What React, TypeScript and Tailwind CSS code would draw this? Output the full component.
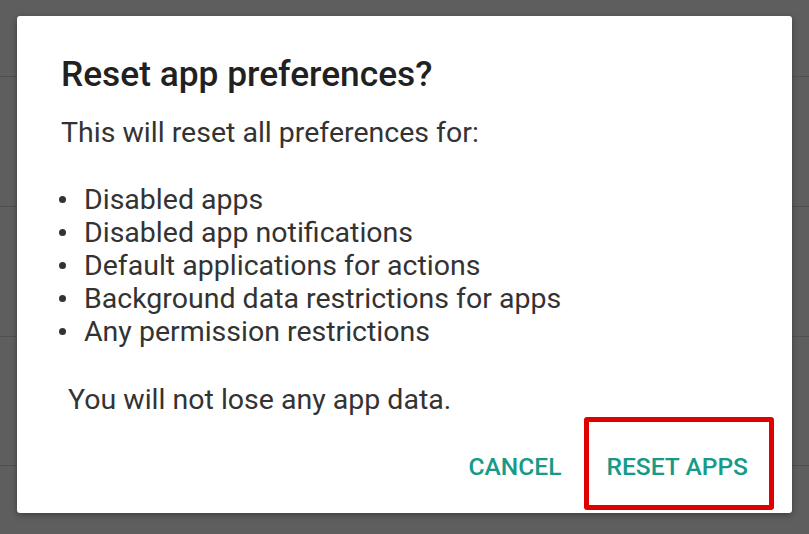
export default function App() {
  const items = [
    "Disabled apps",
    "Disabled app notifications",
    "Default applications for actions",
    "Background data restrictions for apps",
    "Any permission restrictions",
  ];

  return (
    <main className="relative w-[809px] h-[534px] overflow-hidden bg-[#5e5e5e] font-['Roboto',sans-serif]">
      {/* dimmed settings list behind the dialog */}
      <div className="flex flex-col">
        <div className="h-[77px] border-b border-[#505050]" />
        <div className="h-[130px] border-b border-[#505050]" />
        <div className="h-[130px] border-b border-[#505050]" />
        <div className="h-[129px] border-b border-[#505050]" />
      </div>

      {/* Dialog */}
      <div className="absolute left-[17px] top-[16px] w-[775px] h-[497px] rounded-[3px] bg-white pl-[44px] pr-[44px] pt-[39px] shadow-[0_2px_6px_rgba(0,0,0,0.35)]">
        <h1 className="text-[35.3px] leading-[38px] font-medium text-[#212121]">
          Reset app preferences?
        </h1>

        <div className="mt-[23px] text-[28.5px] leading-[33px] text-[#333333]">
          <p>This will reset all preferences for:</p>
          <ul className="mt-[34px]">
            {items.map((item) => (
              <li key={item} className="flex items-center">
                <span className="w-[7px] h-[7px] rounded-full bg-[#333333] mr-[18px] ml-[-2px]" />
                {item}
              </li>
            ))}
          </ul>
          <p className="mt-[35px] pl-[7px]">You will not lose any app data.</p>
        </div>

        <div className="mt-[37px] flex justify-end items-center gap-[45px] text-[24.6px] leading-[28px] font-medium text-[#179a88]">
          <span>CANCEL</span>
          <span className="relative">
            RESET APPS
            {/* highlight annotation */}
            <span className="absolute left-[-22px] top-[-36px] w-[190px] h-[93px] rounded-[3px] border-[5px] border-[#e10000]" />
          </span>
        </div>
      </div>
    </main>
  );
}
